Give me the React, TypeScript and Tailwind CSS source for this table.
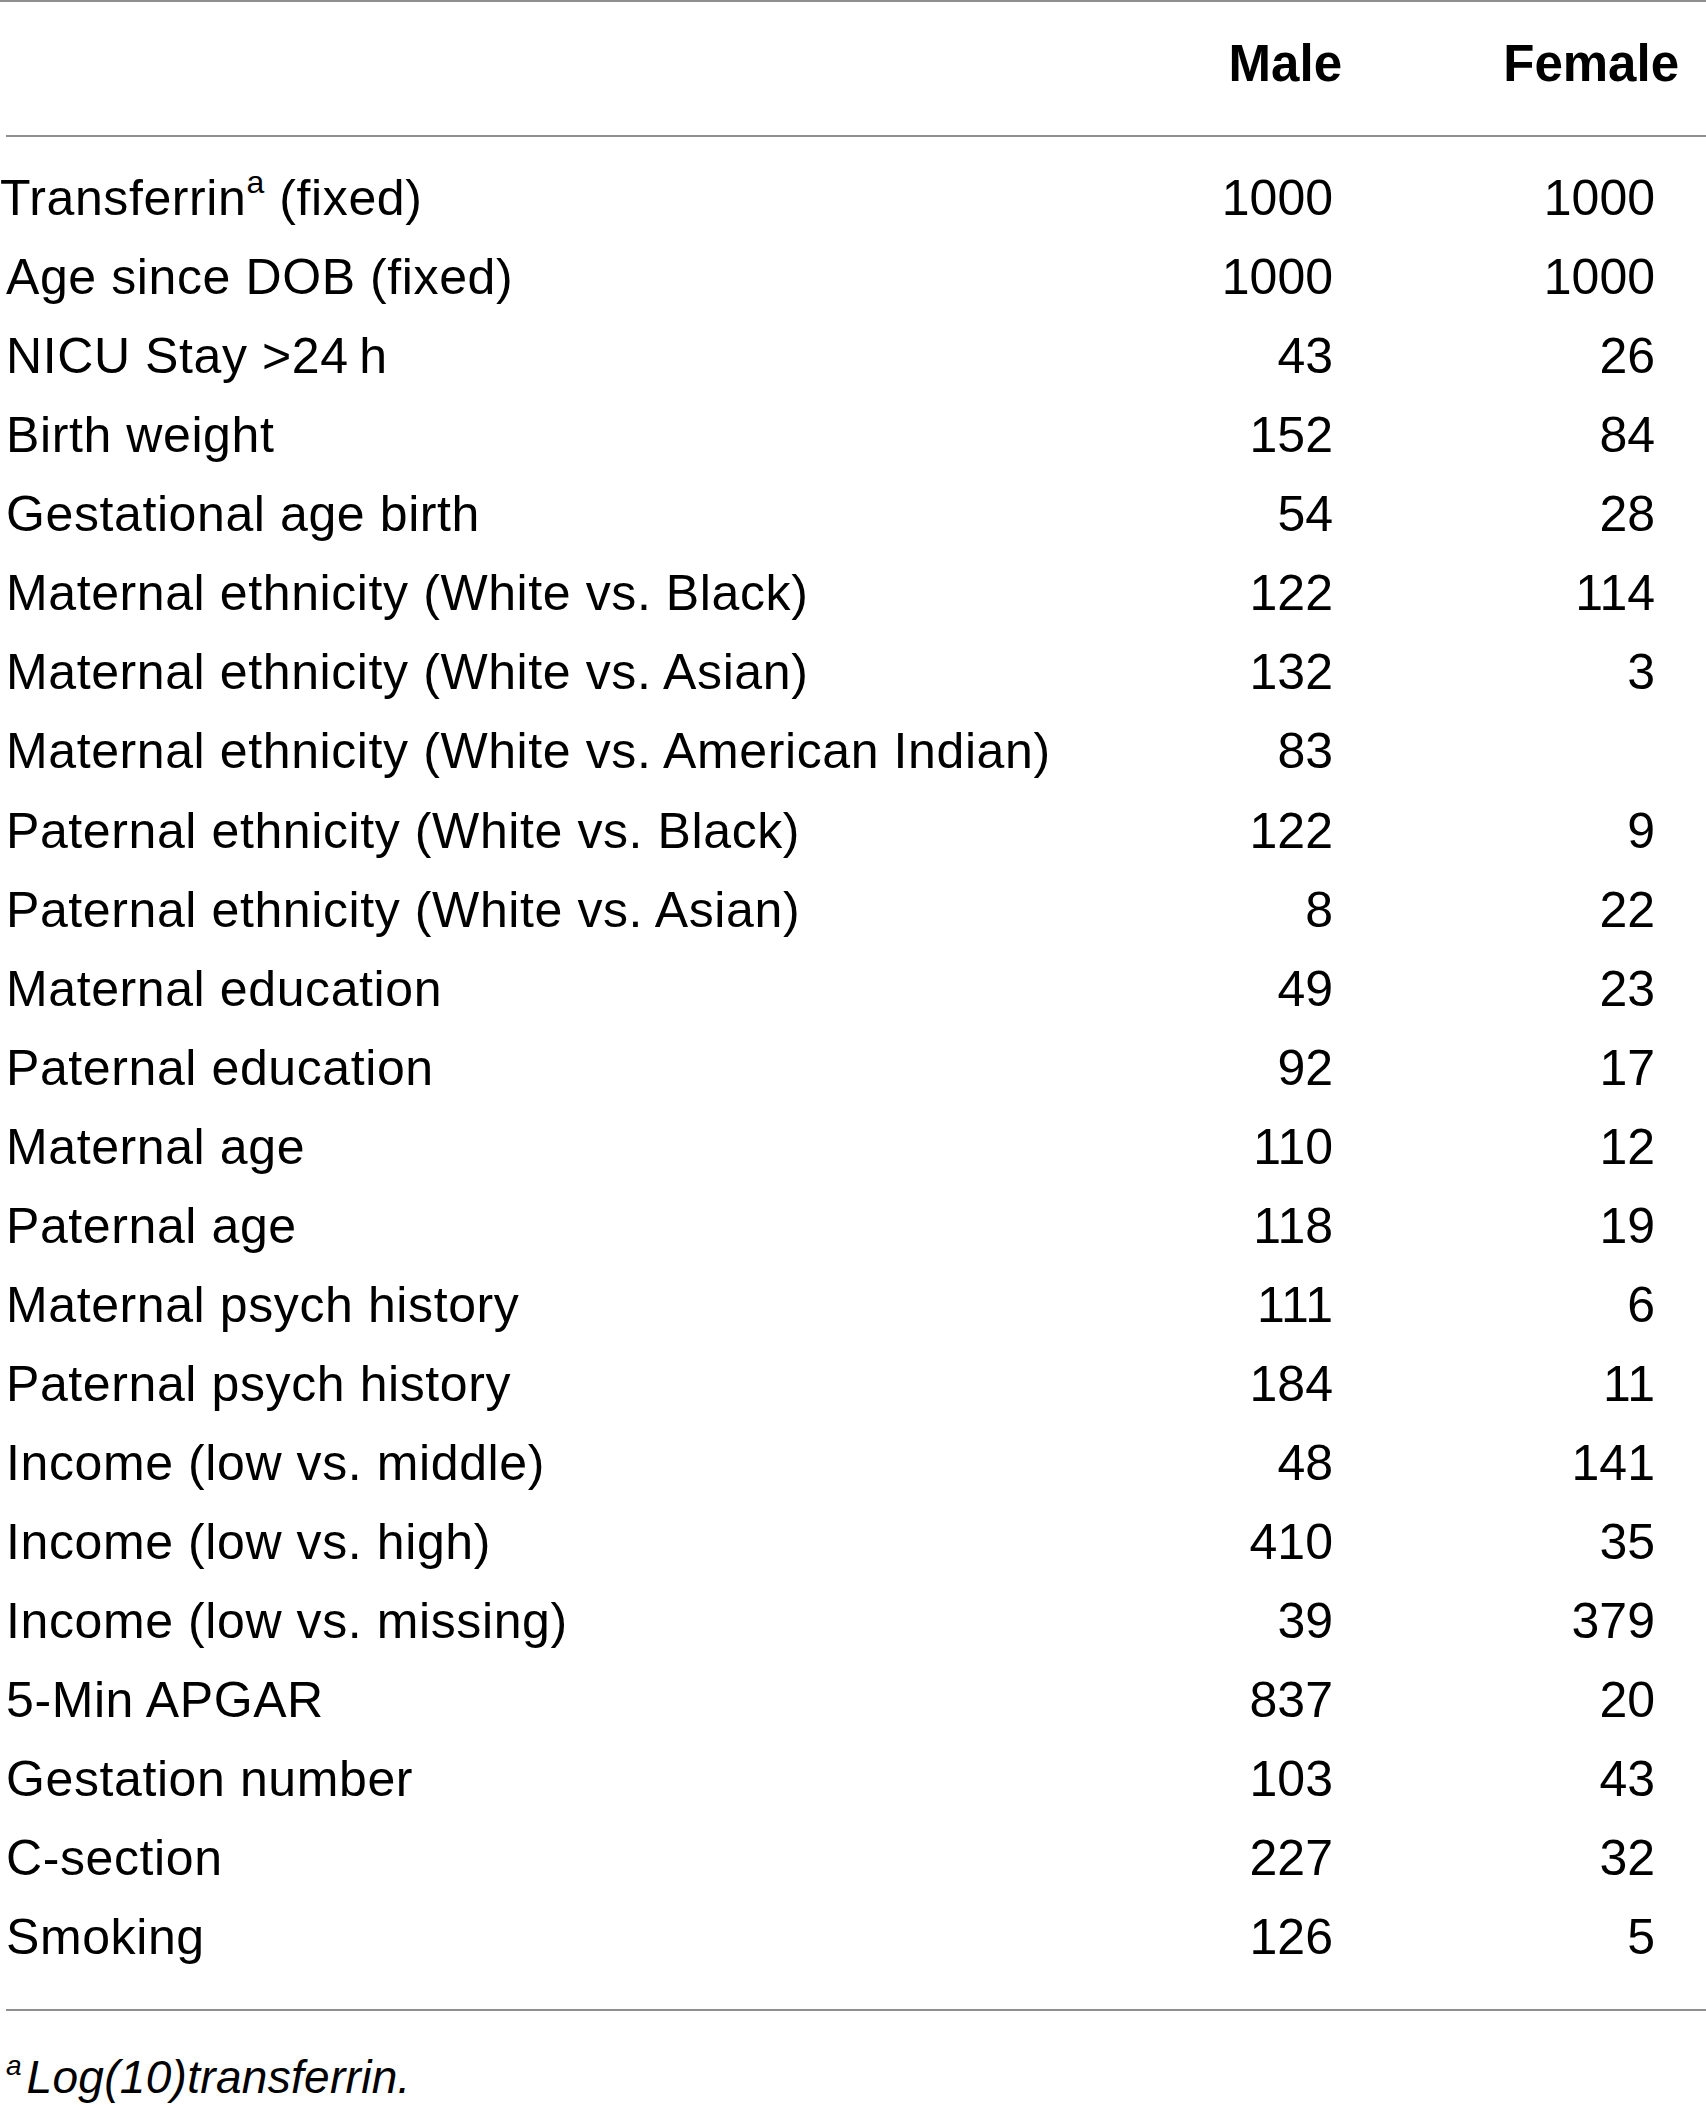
import React from "react";

const rows: [React.ReactNode, string, string][] = [
  [<>Transferrin<sup className="text-[32px] relative top-[-4px] align-super leading-none">a</sup> (fixed)</>, "1000", "1000"],
  ["Age since DOB (fixed)", "1000", "1000"],
  [<>NICU Stay &gt;24&#8201;h</>, "43", "26"],
  ["Birth weight", "152", "84"],
  ["Gestational age birth", "54", "28"],
  ["Maternal ethnicity (White vs. Black)", "122", "114"],
  ["Maternal ethnicity (White vs. Asian)", "132", "3"],
  ["Maternal ethnicity (White vs. American Indian)", "83", ""],
  ["Paternal ethnicity (White vs. Black)", "122", "9"],
  ["Paternal ethnicity (White vs. Asian)", "8", "22"],
  ["Maternal education", "49", "23"],
  ["Paternal education", "92", "17"],
  ["Maternal age", "110", "12"],
  ["Paternal age", "118", "19"],
  ["Maternal psych history", "111", "6"],
  ["Paternal psych history", "184", "11"],
  ["Income (low vs. middle)", "48", "141"],
  ["Income (low vs. high)", "410", "35"],
  ["Income (low vs. missing)", "39", "379"],
  ["5-Min APGAR", "837", "20"],
  ["Gestation number", "103", "43"],
  ["C-section", "227", "32"],
  ["Smoking", "126", "5"],
];

export default function App() {
  return (
    <div
      className="w-[1706px] h-[2105px] bg-white text-black overflow-hidden"
      style={{ fontFamily: '"Liberation Sans", Arial, sans-serif' }}
    >
      <div className="h-[2px] bg-[#8f8f8f]" />
      <div className="h-[133px] flex items-center pb-[8px] text-[51px] font-bold">
        <div className="flex-1" />
        <div className="w-[250px] text-right">Male</div>
        <div className="w-[364px] text-right pr-[27px]">Female</div>
      </div>
      <div className="ml-[6px] h-[2px] bg-[#8f8f8f]" />
      <div className="pt-[22px] pb-[32px]">
        {rows.map(([label, m, f], i) => (
          <div key={i} className="flex h-[79.07px] leading-[79px] text-[50px] font-light">
            <div className={i === 0 ? "flex-1 pl-[0px] tracking-[0.6px]" : "flex-1 pl-[6px] tracking-[0.6px]"}>{label}</div>
            <div className="w-[250px] text-right pr-[9px]">{m}</div>
            <div className="w-[364px] text-right pr-[51px]">{f}</div>
          </div>
        ))}
      </div>
      <div className="ml-[6px] h-[2px] bg-[#8f8f8f]" />
      <div className="pl-[6px] pt-[34px] text-[46px] italic leading-[64px]">
        <sup className="text-[28px] align-super leading-none relative top-[-2px]">a</sup>
        <span className="ml-[5px] tracking-[0.3px]">Log(10)transferrin.</span>
      </div>
    </div>
  );
}
